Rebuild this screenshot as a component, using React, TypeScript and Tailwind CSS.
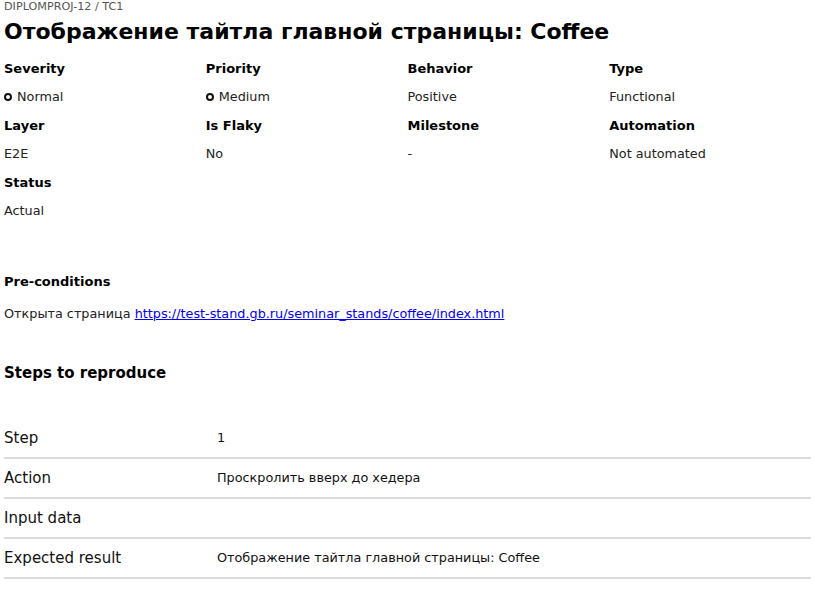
import React from "react";

function Field({ label, value, circle }: { label: string; value: string; circle?: boolean }) {
  return (
    <div className="flex flex-col">
      <div className="text-[13px] leading-[16px] font-bold text-black">{label}</div>
      <div className="mt-[12px] text-[12.8px] leading-[16px] text-[#222] flex items-center gap-[5px]">
        {circle && <span className="inline-block w-[8px] h-[8px] rounded-full border-2 border-[#111]" />}
        <span>{value}</span>
      </div>
    </div>
  );
}

function Row({ label, value }: { label: string; value: string }) {
  return (
    <div className="flex items-center h-[40px] border-b-2 border-[#dcdcdc]">
      <div className="w-[213px] text-[15px] leading-[18px] text-[#111]">{label}</div>
      <div className="text-[12.8px] leading-[16px] text-[#111]">{value}</div>
    </div>
  );
}

export default function App() {
  return (
    <div className="w-[815px] px-[4px] bg-white font-['DejaVu_Sans',sans-serif] text-black">
      <div className="text-[11.2px] leading-[14px] text-[#555]">DIPLOMPROJ-12 / TC1</div>
      <h1 className="mt-[4px] text-[22px] leading-[28px] font-bold">
        Отображение тайтла главной страницы: Coffee
      </h1>
      <div className="mt-[15px] grid grid-cols-4 gap-y-[13px]">
        <Field label="Severity" value="Normal" circle />
        <Field label="Priority" value="Medium" circle />
        <Field label="Behavior" value="Positive" />
        <Field label="Type" value="Functional" />
        <Field label="Layer" value="E2E" />
        <Field label="Is Flaky" value="No" />
        <Field label="Milestone" value="-" />
        <Field label="Automation" value="Not automated" />
        <Field label="Status" value="Actual" />
      </div>
      <div className="mt-[55px] text-[13px] leading-[16px] font-bold">Pre-conditions</div>
      <div className="mt-[16px] text-[12.8px] leading-[16px] text-[#222]">
        Открыта страница{" "}
        <a href="#" className="text-[#0000ee] underline">
          https://test-stand.gb.ru/seminar_stands/coffee/index.html
        </a>
      </div>
      <div className="mt-[42px] text-[15px] leading-[18px] font-bold">Steps to reproduce</div>
      <div className="mt-[37px] flex flex-col">
        <Row label="Step" value="1" />
        <Row label="Action" value="Проскролить вверх до хедера" />
        <Row label="Input data" value="" />
        <Row label="Expected result" value="Отображение тайтла главной страницы: Coffee" />
      </div>
    </div>
  );
}
